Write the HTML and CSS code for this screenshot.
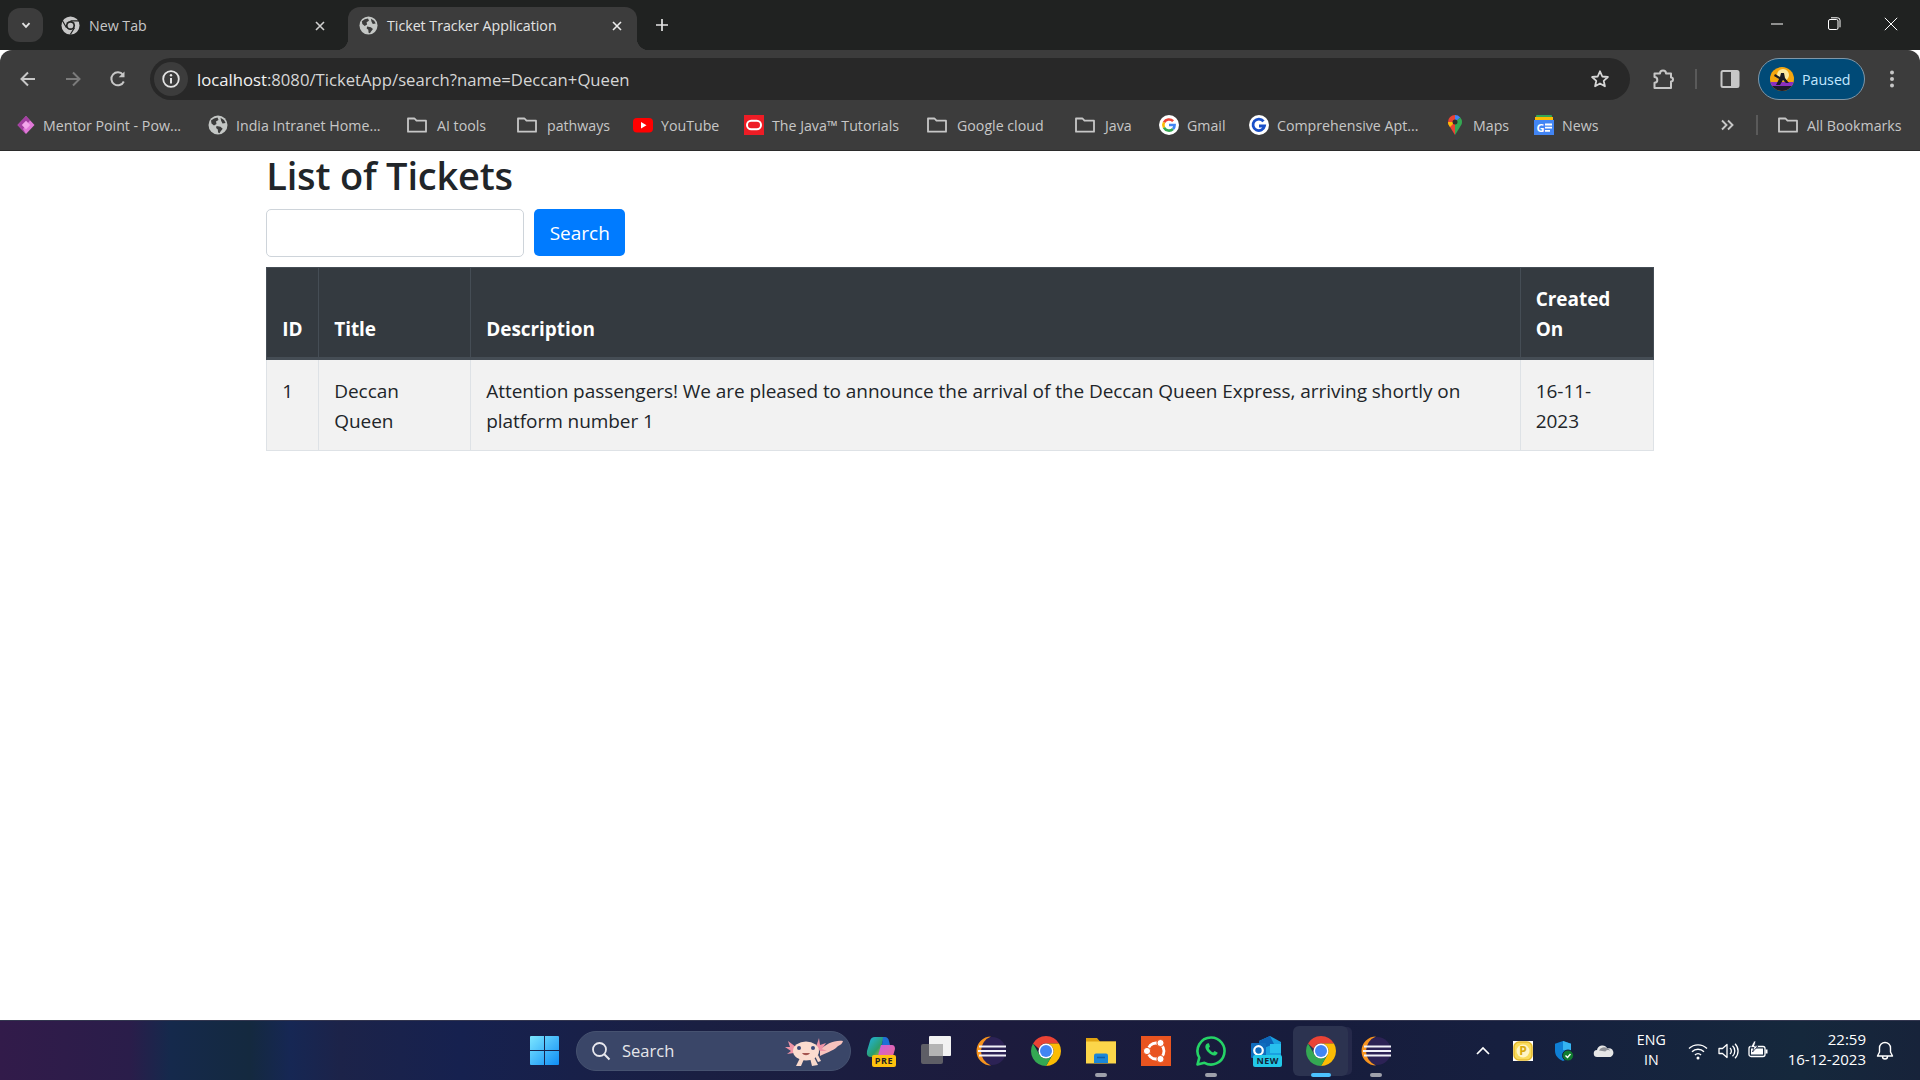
FILE: index.html
```html
<!DOCTYPE html>
<html lang="en">
<head>
<meta charset="utf-8">
<title>Ticket Tracker Application</title>
<link rel="stylesheet" href="styles.css">
</head>
<body>
<svg class="defs" width="0" height="0" aria-hidden="true">
  <symbol id="chrome" viewBox="4 4 40 40">
    <path fill="#ea4335" d="M24 4a20 20 0 0 1 17.32 10H24a10 10 0 0 0-9.5 6.9L6.68 14A20 20 0 0 1 24 4z"/>
    <path fill="#fbbc04" d="M41.32 14A20 20 0 0 1 24 44l8.66-15A10 10 0 0 0 24 14z"/>
    <path fill="#34a853" d="M24 44A20 20 0 0 1 6.68 14l8.66 15A10 10 0 0 0 32.66 29z"/>
    <circle cx="24" cy="24" r="10" fill="#fff"/>
    <circle cx="24" cy="24" r="8" fill="#4285f4"/>
  </symbol>
  <symbol id="globe" viewBox="0 0 20 20">
    <circle cx="10" cy="10" r="9.5" fill="#c4c7c5"/>
    <path fill="#3c3c3c" d="M3 5.5 6 3.5 9.5 2.5 10.5 5 8 6.5 8.5 9 6 10.5 3.5 8.5zM12.5 2.8 16 5l1.6 3-3.1.4-1.4-2.6zM8.5 11l4 .8 2.2 2-2 2.4-1.2 2-1.4-.6-.3-3-1.7-1.5z"/>
  </symbol>
  <symbol id="folder" viewBox="0 0 20 20">
    <path fill="none" stroke="#c7c7c7" stroke-width="1.8" stroke-linejoin="round" d="M1 3.500h6.500l2 2.200H19v11H1z"/>
  </symbol>
  <symbol id="gmark" viewBox="0 0 20 20">
    <circle cx="10" cy="10" r="10" fill="#fff"/>
    <path fill="none" stroke="#ea4335" stroke-width="2.6" d="M14.1 6.2A5.7 5.7 0 0 0 5 7.4"/>
    <path fill="none" stroke="#fbbc04" stroke-width="2.6" d="M5 7.4a5.7 5.7 0 0 0 0 5.2"/>
    <path fill="none" stroke="#34a853" stroke-width="2.6" d="M5 12.6a5.7 5.7 0 0 0 9 1.4"/>
    <path fill="none" stroke="#4285f4" stroke-width="2.6" d="M14 14a5.6 5.6 0 0 0 1.6-4H10"/>
  </symbol>
  <symbol id="eclipse" viewBox="0 0 30 30">
    <circle cx="16" cy="15" r="14" fill="#2c2255"/>
    <path fill="#f7941e" d="M15 0.5A14.5 14.5 0 0 0 15 29.5 15.5 15.5 0 0 1 15 .5z"/>
    <path fill="none" stroke="#f1f1f8" stroke-width="2" d="M3 10.500H30M2 15H30M3 19.500H30"/>
  </symbol>
</svg>

<header class="browser">
  <div class="tabstrip">
    <button class="tab-search" type="button">
      <svg class="ico-sm" viewBox="0 0 14 14"><path d="M3.500 5.200 7 8.800l3.500-3.600" fill="none" stroke="#e3e3e3" stroke-width="1.900"/></svg>
    </button>
    <div class="tab">
      <svg class="favicon" viewBox="0 0 20 20">
        <circle cx="10" cy="10" r="9.500" fill="#c7c7c7"/>
        <circle cx="10" cy="10" r="4.800" fill="#202221"/>
        <circle cx="10" cy="10" r="3" fill="#c7c7c7"/>
        <path d="M10 5.200h9M5.800 12.400 1.500 5M14.200 12.400 9.800 19.500" stroke="#202221" stroke-width="1.300"/>
      </svg>
      <span class="tab-title">New Tab</span>
      <svg class="tab-close" viewBox="0 0 12 12"><path d="M2 2l8 8M10 2l-8 8" stroke="#d0d0d0" stroke-width="1.600"/></svg>
    </div>
    <div class="tab tab-active">
      <svg class="favicon"><use href="#globe"/></svg>
      <span class="tab-title">Ticket Tracker Application</span>
      <svg class="tab-close" viewBox="0 0 12 12"><path d="M2 2l8 8M10 2l-8 8" stroke="#ececec" stroke-width="1.600"/></svg>
    </div>
    <svg class="newtab" viewBox="0 0 14 14"><path d="M7 1v12M1 7h12" stroke="#e3e3e3" stroke-width="1.700"/></svg>
    <div class="winctl">
      <svg class="winbtn" viewBox="0 0 14 14"><path d="M1 7h12" stroke="#fff" stroke-width="1"/></svg>
      <svg class="winbtn" viewBox="0 0 14 14"><rect x="1.500" y="2.500" width="9.500" height="10" rx="1.500" fill="none" stroke="#fff"/><path d="M4 .8h6.500a2.500 2.500 0 0 1 2.500 2.500v7" fill="none" stroke="#fff"/></svg>
      <svg class="winbtn" viewBox="0 0 14 14"><path d="M.8.800l12.400 12.400M13.200.800.800 13.200" stroke="#fff" stroke-width="1"/></svg>
    </div>
  </div>

  <div class="toolbar">
    <svg class="tool" viewBox="0 0 20 20"><path d="M17 10H4M10 3.500 3.500 10l6.500 6.500" fill="none" stroke="#c7c7c7" stroke-width="2"/></svg>
    <svg class="tool" viewBox="0 0 20 20"><path d="M3 10h13M10 3.500l6.500 6.500-6.500 6.500" fill="none" stroke="#7b7b7b" stroke-width="2"/></svg>
    <svg class="tool" viewBox="0 0 20 20"><path d="M15.800 12.500A6.500 6.500 0 1 1 15 5.800" fill="none" stroke="#c7c7c7" stroke-width="2"/><path d="M16.500 2.500v5.800h-5.800z" fill="#c7c7c7"/></svg>
    <div class="omnibox">
      <span class="site-info">
        <svg class="info" viewBox="0 0 20 20"><circle cx="10" cy="10" r="7.800" fill="none" stroke="#e3e3e3" stroke-width="1.800"/><path d="M10 9v5.500" stroke="#e3e3e3" stroke-width="2"/><circle cx="10" cy="6.300" r="1.200" fill="#e3e3e3"/></svg>
      </span>
      <span class="url"><span class="url-host">localhost</span>:8080/TicketApp/search?name=Deccan+Queen</span>
      <svg class="star" viewBox="0 0 20 20"><path d="M10 2.300l2.300 5.200 5.600.5-4.200 3.800 1.200 5.500L10 14.500l-4.900 2.800 1.200-5.500L2.100 8l5.600-.5z" fill="none" stroke="#d6d6d6" stroke-width="1.800" stroke-linejoin="round"/></svg>
    </div>
    <div class="actions">
      <svg class="tool-r puzzle" viewBox="0 0 20 20"><path d="M1.500 19v-5.300a2.800 2.800 0 0 0 0-5.600V4.500h5.500a3 3 0 0 1 6 0h5v4a2 2 0 0 1 0 4v6.500z" fill="none" stroke="#c7c7c7" stroke-width="2" stroke-linejoin="round"/></svg>
      <span class="vsep"></span>
      <svg class="tool-r panel" viewBox="0 0 20 20"><rect x="1.500" y="2" width="17" height="16" rx="1.500" fill="none" stroke="#c7c7c7" stroke-width="2"/><rect x="11" y="2" width="7.500" height="16" fill="#c7c7c7"/></svg>
      <div class="profile">
        <svg class="avatar" viewBox="0 0 24 24">
          <defs><clipPath id="avc"><circle cx="12" cy="12" r="12"/></clipPath></defs>
          <g clip-path="url(#avc)">
            <rect width="24" height="24" fill="#f5a60e"/>
            <circle cx="13" cy="8" r="6" fill="#fde9a0"/>
            <rect y="15" width="24" height="4" fill="#8b2fc0"/>
            <rect y="19" width="24" height="5" fill="#1e1a2c"/>
            <path d="M5 7l5 3 1-4h3l1 5 4 5h-3l-3-3-3 5H6l3-6-5-3z" fill="#1b1b24"/>
          </g>
        </svg>
        <span class="paused">Paused</span>
      </div>
      <svg class="tool-r dots" viewBox="0 0 6 20"><circle cx="3" cy="3.500" r="2" fill="#c7c7c7"/><circle cx="3" cy="10" r="2" fill="#c7c7c7"/><circle cx="3" cy="16.500" r="2" fill="#c7c7c7"/></svg>
    </div>
  </div>

  <nav class="bookmarks">
    <a class="bm bm-first"><svg class="bm-ico" viewBox="0 0 20 20"><path d="M10 1 18.500 10 10 19 1.500 10z" fill="#e078d8"/><path d="M10 1 14 5.500 7 14l3 5-8.500-9z" fill="#a33ea1"/><path d="M10 5.800 14.200 10 10 14.200 5.800 10z" fill="#f4a6ec"/></svg><span>Mentor Point - Pow...</span></a>
    <a class="bm"><svg class="bm-ico"><use href="#globe"/></svg><span>India Intranet Home...</span></a>
    <a class="bm bm-folder"><svg class="bm-ico"><use href="#folder"/></svg><span>AI tools</span></a>
    <a class="bm bm-folder"><svg class="bm-ico"><use href="#folder"/></svg><span>pathways</span></a>
    <a class="bm"><svg class="bm-ico" viewBox="0 0 20 20"><rect y="3" width="20" height="14.500" rx="4" fill="#f00"/><path d="M8 7l5.500 3.200L8 13.500z" fill="#fff"/></svg><span>YouTube</span></a>
    <a class="bm"><svg class="bm-ico" viewBox="0 0 20 20"><rect width="20" height="20" fill="#ee1c25"/><rect x="3" y="5.800" width="14" height="8.400" rx="4.200" fill="none" stroke="#fff" stroke-width="2"/></svg><span>The Java™ Tutorials</span></a>
    <a class="bm bm-folder"><svg class="bm-ico"><use href="#folder"/></svg><span>Google cloud</span></a>
    <a class="bm bm-folder"><svg class="bm-ico"><use href="#folder"/></svg><span>Java</span></a>
    <a class="bm"><svg class="bm-ico"><use href="#gmark"/></svg><span>Gmail</span></a>
    <a class="bm"><svg class="bm-ico" viewBox="0 0 20 20"><circle cx="10" cy="10" r="10" fill="#fff"/><path d="M14.500 6.400A5.800 5.800 0 1 0 15.500 11H10" fill="none" stroke="#1a50c8" stroke-width="2.800"/></svg><span>Comprehensive Apt...</span></a>
    <a class="bm"><svg class="bm-ico" viewBox="0 0 20 20"><path d="M10 0a7 7 0 0 0-7 7c0 2 .8 3.500 2 5l5 8V10z" fill="#ea4335"/><path d="M10 0a7 7 0 0 1 5.300 2.400L10 7z" fill="#4285f4"/><path d="M15.300 2.400A7 7 0 0 1 17 7c0 2-1 3.500-2 5l-5 8V7z" fill="#34a853"/><path d="M3 7c0 2 .8 3.500 2 5l5-5z" fill="#fbbc04"/><circle cx="10" cy="7" r="2.500" fill="#2f2f2f"/></svg><span>Maps</span></a>
    <a class="bm"><svg class="bm-ico" viewBox="0 0 20 20"><rect x="2" y="0" width="16" height="6" rx="1" fill="#34a853"/><rect x="1" y="2" width="18" height="5" fill="#fbbc04"/><rect y="5" width="20" height="15" fill="#4285f4"/><text class="news-g" x="2.500" y="16.500">G</text><path d="M11 9.500h7M11 12.700h7M11 15.900h5" stroke="#fff" stroke-width="1.800"/></svg><span>News</span></a>
    <svg class="more" viewBox="0 0 14 14"><path d="M2 2.500 6.500 7 2 11.500M8 2.500 12.500 7 8 11.500" fill="none" stroke="#c7c7c7" stroke-width="1.900"/></svg>
    <span class="vsep"></span>
    <a class="bm bm-folder bm-all"><svg class="bm-ico"><use href="#folder"/></svg><span>All Bookmarks</span></a>
  </nav>
</header>

<main class="page">
  <div class="container">
    <h2 class="heading">List of Tickets</h2>
    <form class="search-form">
      <input class="search-input" type="text" aria-label="Search">
      <button class="search-btn" type="button">Search</button>
    </form>
    <table class="tickets">
      <thead>
        <tr><th class="c-id">ID</th><th class="c-title">Title</th><th>Description</th><th class="c-date">Created On</th></tr>
      </thead>
      <tbody>
        <tr>
          <td>1</td>
          <td>Deccan Queen</td>
          <td>Attention passengers! We are pleased to announce the arrival of the Deccan Queen Express, arriving shortly on platform number 1</td>
          <td>16-11-<br>2023</td>
        </tr>
      </tbody>
    </table>
  </div>
</main>

<footer class="taskbar">
  <div class="tb-center">
    <svg class="winlogo" viewBox="0 0 30 30">
      <defs><linearGradient id="wl" x1="0" y1="0" x2="1" y2="1"><stop offset="0" stop-color="#7ce6ff"/><stop offset="1" stop-color="#0f8df5"/></linearGradient></defs>
      <path fill="url(#wl)" d="M1 0h13.500v14.500H0V1a1 1 0 0 1 1-1zM15.500 0H29a1 1 0 0 1 1 1v13.500H15.500zM0 15.500h14.500V30H1a1 1 0 0 1-1-1zM15.500 15.500H30V29a1 1 0 0 1-1 1H15.500z"/>
    </svg>
    <div class="tb-search">
      <svg class="tb-glass" viewBox="0 0 20 20"><circle cx="8.500" cy="8.500" r="6.500" fill="none" stroke="#e8e8ee" stroke-width="1.800"/><path d="M13.300 13.300 18.500 18.500" stroke="#e8e8ee" stroke-width="2"/></svg>
      <span class="tb-search-text">Search</span>
      <svg class="axolotl" viewBox="0 0 60 34">
        <path d="M36 16c6-6 14-10 23-9-1 4-4 4-6 6-4 4-12 6-17 9z" fill="#f8c3bd"/>
        <path d="M12 13 4 7l2 6-5 0 6 4-4 3 7-1zM32 13l3-9 1 7 6-2-4 6 5 2-7 0z" fill="#ef94a6"/>
        <path d="M12 32l4-8 4 1-3 7zM28 32l-2-8 4-1 4 8zM34 28l-3-6 3-1 3 6z" fill="#f9d9cb"/>
        <ellipse cx="22" cy="17" rx="13" ry="9.500" fill="#fbdccf"/>
        <circle cx="15" cy="14" r="2" fill="#3a4a7a"/><circle cx="29" cy="14" r="2" fill="#3a4a7a"/>
        <path d="M18 19c2 3 6 3 8 0z" fill="#a5544f"/>
      </svg>
    </div>
    <div class="tb-apps">
      <span class="app">
        <svg class="app-ico" viewBox="0 0 30 30">
          <defs><linearGradient id="cp1" x1="0" y1="0" x2="1" y2="1"><stop offset="0" stop-color="#1fb5e8"/><stop offset=".6" stop-color="#2c9e6a"/><stop offset="1" stop-color="#f3c31b"/></linearGradient><linearGradient id="cp2" x1="0" y1="0" x2="1" y2="1"><stop offset="0" stop-color="#c95fe0"/><stop offset="1" stop-color="#ef6a8c"/></linearGradient></defs>
          <path fill="url(#cp1)" d="M9 1h9l-6 20H5q-5 0-4-6L4 5q1-4 5-4z"/>
          <path fill="url(#cp2)" d="M15 9h11q3 0 3 4l-2 7q-1 3-5 3H11z"/>
          <path fill="#1f6fd6" d="M17 1h2q3 0 4 4l1 4h-8z"/>
        </svg>
        <span class="badge badge-pre">PRE</span>
      </span>
      <span class="app">
        <svg class="app-ico" viewBox="0 0 30 30"><rect x="0" y="8" width="22" height="20" rx="2" fill="#5e5e66"/><rect x="8" y="0" width="22" height="20" rx="1" fill="#f2f2f2"/><rect x="8" y="8" width="14" height="12" fill="#b4b4b4"/></svg>
      </span>
      <span class="app"><svg class="app-ico"><use href="#eclipse"/></svg></span>
      <span class="app"><svg class="app-ico"><use href="#chrome"/></svg></span>
      <span class="app has-dot">
        <svg class="app-ico" viewBox="0 0 30 30"><path d="M0 2h11l3 3.500H30V27H0z" fill="#e0a310"/><rect y="5.500" width="30" height="22" fill="#fcd64a"/><path d="M8 19.500a2 2 0 0 1 2-2h10a2 2 0 0 1 2 2V27H8z" fill="#1a86d8"/><path d="M11 21.500h8" stroke="#0e5fa8" stroke-width="1.500"/></svg>
      </span>
      <span class="app"><svg class="app-ico" viewBox="0 0 30 30"><rect width="30" height="30" fill="#e95420"/><circle cx="15" cy="15" r="8" fill="none" stroke="#fff" stroke-width="2.800"/><circle cx="6" cy="15" r="3.600" fill="#fff" stroke="#e95420"/><circle cx="19.500" cy="7" r="3.600" fill="#fff" stroke="#e95420"/><circle cx="19.500" cy="23" r="3.600" fill="#fff" stroke="#e95420"/></svg></span>
      <span class="app has-dot"><svg class="app-ico" viewBox="0 0 30 30"><path d="M15 1.500a13.500 13.500 0 1 1-6.500 25.300L1.500 28.500l1.800-6.800A13.500 13.500 0 0 1 15 1.500z" fill="none" stroke="#25d366" stroke-width="2.600" stroke-linejoin="round"/><path d="M10.500 8c-2 2-1.300 5 1.500 8s6 4.300 8 3c1.500-1 1.800-2 1.500-2.500l-3-1.500-1.300 1.500c-1.500-.3-4-2.700-4.500-4.500l1.300-1.200L13 7.500c-.5-.5-1.500-.5-2.500.5z" fill="#25d366"/></svg></span>
      <span class="app">
        <svg class="app-ico" viewBox="0 0 30 30"><path d="M8 5 19 0l11 6v18H8z" fill="#1aa1e0"/><path d="M8 5 19 0l4 8-15 6z" fill="#0c64b8"/><path d="M19 8h11v9H19z" fill="#28c0ee"/><rect y="7" width="15" height="15" rx="1" fill="#0f6cbd"/><circle cx="7.500" cy="14.500" r="4.300" fill="none" stroke="#fff" stroke-width="2.200"/></svg>
        <span class="badge badge-new">NEW</span>
      </span>
      <span class="app app-active">
        <svg class="app-ico"><use href="#chrome"/></svg>
      </span>
      <span class="app has-dot"><svg class="app-ico"><use href="#eclipse"/></svg></span>
    </div>
  </div>
  <div class="tray">
    <svg class="tray-chev" viewBox="0 0 14 8"><path d="M1 7l6-6 6 6" fill="none" stroke="#fff" stroke-width="1.700"/></svg>
    <svg class="tray-p" viewBox="0 0 20 20"><rect width="20" height="20" fill="#fff"/><rect x="1" y="1" width="18" height="18" rx="5" fill="#f9dc5c" stroke="#e6bb2e" stroke-width="1.500"/><circle cx="10" cy="10" r="6.500" fill="#fff5c4"/><text class="tray-p-text" x="10" y="14">P</text></svg>
    <svg class="tray-shield" viewBox="0 0 20 20"><path d="M9 0l8 2.800V10c0 5-4 8.500-8 10-4-1.500-8-5-8-10V2.800z" fill="#0f7fd4"/><path d="M9 0l8 2.800V9H9z" fill="#35b3f0"/><circle cx="14" cy="14.500" r="5.500" fill="#117c30" stroke="#16213d"/><path d="M11.500 14.500l2 2 3-3.500" fill="none" stroke="#fff" stroke-width="1.400"/></svg>
    <svg class="tray-cloud" viewBox="0 0 20 12"><path d="M3.500 12a3.500 3.500 0 0 1-.5-7 5.500 5.500 0 0 1 10.300-1.500A4.200 4.200 0 0 1 16.500 12z" fill="#e6e6e6"/><path d="M5 5.500a5.500 5.500 0 0 1 8.300-2 4.200 4.200 0 0 1 3 2.500 3 3 0 0 0-5 .5z" fill="#8d8f96"/></svg>
    <div class="lang"><span>ENG</span><span>IN</span></div>
    <svg class="tray-ico" viewBox="0 0 20 20"><path d="M1 7.500a13 13 0 0 1 18 0M4 10.800a8.500 8.500 0 0 1 12 0M7 14a4 4 0 0 1 6 0" fill="none" stroke="#fff" stroke-width="1.400"/><circle cx="10" cy="17" r="1.500" fill="#fff"/></svg>
    <svg class="tray-ico" viewBox="0 0 20 20"><path d="M1 7.500h3.500L9 3.500v13l-4.500-4H1z" fill="none" stroke="#fff" stroke-width="1.300" stroke-linejoin="round"/><path d="M12 7a4 4 0 0 1 0 6M14.500 4.800a7 7 0 0 1 0 10.400M17 2.800a10 10 0 0 1 0 14.400" fill="none" stroke="#fff" stroke-width="1.300"/></svg>
    <svg class="tray-ico" viewBox="0 0 20 20"><rect x="1" y="5.500" width="16" height="10" rx="2" fill="none" stroke="#fff" stroke-width="1.300"/><rect x="3" y="7.500" width="12" height="6" fill="#fff"/><rect x="17.500" y="8.500" width="2" height="4" fill="#fff"/><path d="M6 0 2.500 6.500H6L4.500 11 10 5H6.500L8 0z" fill="#fff" stroke="#16213d" stroke-width=".8"/></svg>
    <div class="clock"><span>22:59</span><span>16-12-2023</span></div>
    <svg class="tray-bell" viewBox="0 0 20 20"><path d="M10 1.500a5.500 5.500 0 0 0-5.500 5.500v4L2.500 15h15l-2-4V7A5.500 5.500 0 0 0 10 1.500zM7.500 15.500a2.500 2.500 0 0 0 5 0" fill="none" stroke="#fff" stroke-width="1.400" stroke-linejoin="round"/></svg>
  </div>
</footer>
</body>
</html>
```

FILE: styles.css
```css
* { box-sizing: border-box; }
html, body { height: 100%; }
body {
  margin: 0;
  display: flex;
  flex-direction: column;
  height: 1080px;
  overflow: hidden;
  background: #fff;
  color: #212529;
  font-family: "Open Sans", "Noto Sans", "Liberation Sans", sans-serif;
}
.defs { position: absolute; }
svg { display: block; flex: none; overflow: visible; }

/* browser chrome */
.browser { flex: none; }
.tabstrip {
  height: 50px;
  background: #202221;
  display: flex;
  align-items: flex-end;
  padding-left: 8px;
}
.tab-search {
  width: 35px;
  height: 34px;
  margin-bottom: 8px;
  border: 0;
  padding: 0;
  border-radius: 12px;
  background: #3c3c3c;
  display: flex;
  align-items: center;
  justify-content: center;
}
.ico-sm { width: 14px; height: 14px; }
.tab {
  width: 292px;
  height: 43px;
  margin-left: 5px;
  padding: 0 14px 6px 13px;
  display: flex;
  align-items: center;
  color: #c7c7c7;
  font-size: 14.2px;
  position: relative;
}
.tab + .tab { margin-left: 8px; width: 289px; padding-left: 11px; }
.tab-active {
  background: #3c3c3c;
  border-radius: 12px 12px 0 0;
  color: #e3e3e3;
}
.tab-active::before,
.tab-active::after {
  content: "";
  position: absolute;
  bottom: 0;
  width: 12px;
  height: 12px;
}
.tab-active::before { left: -12px; background: radial-gradient(circle at 0 0, transparent 12px, #3c3c3c 12.500px); }
.tab-active::after { right: -12px; background: radial-gradient(circle at 100% 0, transparent 12px, #3c3c3c 12.500px); }
.favicon { width: 19px; height: 19px; }
.tab-title { margin-left: 9px; flex: 1; white-space: nowrap; }
.tab-close { width: 12px; height: 12px; margin-right: 0; }
.newtab { width: 14px; height: 14px; margin: 0 0 18px 18px; }
.winctl {
  margin-left: auto;
  display: flex;
  align-self: stretch;
  align-items: center;
  gap: 43px;
  padding: 0 22px 2px 0;
}
.winbtn { width: 14px; height: 14px; }

.toolbar {
  height: 50px;
  background: #3c3c3c;
  border-radius: 12px 12px 0 0;
  padding: 8px 0 0 18px;
  display: flex;
  align-items: center;
}
.tool { width: 20px; height: 20px; margin-right: 25px; }
.tool:nth-child(3) { margin-right: 22px; }
.omnibox {
  width: 1480px;
  height: 42px;
  background: #282828;
  border-radius: 21px;
  display: flex;
  align-items: center;
  padding: 0 20px 0 4px;
}
.site-info {
  width: 34px;
  height: 34px;
  border-radius: 50%;
  background: #3c3c3c;
  display: flex;
  align-items: center;
  justify-content: center;
}
.info { width: 20px; height: 20px; }
.url {
  margin-left: 9px;
  flex: 1;
  color: #d6d6d6;
  font-size: 16.7px;
  white-space: nowrap;
}
.url-host { color: #f2f2f2; }
.star { width: 20px; height: 20px; }
.actions { display: flex; align-items: center; flex: 1; padding-left: 23px; }
.tool-r { width: 20px; height: 20px; }
.vsep { width: 2px; height: 20px; background: #5a5a5a; flex: none; }
.actions .vsep { margin: 0 23px 0 22px; }
.profile {
  margin-left: 18px;
  width: 107px;
  height: 42px;
  border-radius: 21px;
  background: #004a77;
  border: 1px solid #7f97a8;
  display: flex;
  align-items: center;
  padding-left: 11px;
  color: #c2e7ff;
  font-size: 14.2px;
}
.avatar { width: 24px; height: 24px; }
.paused { margin-left: 8px; }
.dots { width: 6px; margin-left: 24px; }

.bookmarks {
  height: 50px;
  background: #3c3c3c;
  display: grid;
  grid-template-columns: 192px 199px 110px 116px 111px 183px 148px 84px 90px 196px 89px 186px 36px 22px 1fr;
  align-items: center;
  padding-left: 16px;
  color: #c7c7c7;
  font-size: 14.2px;
}
.bm { display: flex; align-items: center; gap: 8px; white-space: nowrap; }
.bm-first { gap: 7px; }
.bm-folder { gap: 10px; }
.bm-all { gap: 9px; }
.bm-ico { width: 20px; height: 20px; }
.news-g { font: 700 11px "Open Sans", sans-serif; fill: #fff; }
.more { width: 14px; height: 14px; }

/* page */
.page {
  flex: 1;
  border-top: 1px solid #2b2b2b;
  background: #fff;
}
.container { width: 1425px; margin: 0 auto; padding: 0 18.750px; }
.heading {
  margin: 0 0 10px;
  font-size: 38px;
  font-weight: 600;
  line-height: 48px;
  letter-spacing: -0.2px;
  color: #212529;
}
.search-form { display: flex; gap: 10px; margin-bottom: 10px; }
.search-input {
  width: 258px;
  height: 48px;
  border: 1px solid #ced4da;
  border-radius: 5px;
  background: #fff;
}
.search-btn {
  width: 91px;
  height: 47px;
  border: 0;
  border-radius: 5px;
  background: #007bff;
  color: #fff;
  font: 400 19px/1.5 "Open Sans", sans-serif;
  padding: 2px 0 0;
}
.tickets {
  width: 100%;
  border-collapse: collapse;
  table-layout: fixed;
  font-size: 19px;
  line-height: 30px;
  letter-spacing: -0.06px;
}
.tickets th, .tickets td {
  padding: 15px;
  text-align: left;
  vertical-align: bottom;
  font-weight: 400;
}
.tickets th {
  background: #343a40;
  color: #fff;
  font-weight: 700;
  border: 1px solid #454d55;
  border-bottom-width: 3px;
  height: 91px;
  padding: 15px 15px 13px;
}
.tickets td {
  background: #f2f2f2;
  border: 1px solid #dee2e6;
  vertical-align: top;
  padding: 16px 15px 14px;
}
.c-id { width: 52px; }
.c-title { width: 152px; }
.c-date { width: 133px; }

/* taskbar */
.taskbar {
  flex: none;
  height: 60px;
  border-top: 1px solid #33364f;
  background: linear-gradient(90deg, #321b4a 0, #2a1d4a 130px, #15294c 170px, #14293f 250px, #162754 290px, #1c2349 340px, #16214f 460px, #1a1f42 700px, #1c1b3d 1000px, #171c3c 1300px, #161f3f 1500px, #15283c 1800px, #17233a 1920px);
  display: flex;
  align-items: center;
  color: #fff;
}
.tb-center { display: flex; align-items: center; padding-left: 530px; }
.winlogo { width: 29px; height: 29px; }
.tb-search {
  margin-left: 17px;
  width: 275px;
  height: 40px;
  border-radius: 20px;
  background: #3a4668;
  border: 1px solid #465270;
  display: flex;
  align-items: center;
  padding-left: 14px;
  position: relative;
  color: #e6e6ea;
  font-size: 16.500px;
}
.tb-glass { width: 20px; height: 20px; }
.tb-search-text { margin-left: 11px; }
.axolotl { width: 60px; height: 34px; margin-left: auto; margin-right: 6px; }
.tb-apps { display: flex; align-items: center; margin-left: 2px; }
.app {
  width: 55px;
  height: 50px;
  display: flex;
  align-items: center;
  justify-content: center;
  position: relative;
}
.app-ico { width: 30px; height: 30px; }
.has-dot::after, .app-active::after {
  content: "";
  position: absolute;
  left: 50%;
  bottom: -1px;
  width: 12px;
  height: 4px;
  margin-left: -6px;
  border-radius: 2px;
  background: #9ea0ab;
}
.app-active {
  background: #2c3350;
  border-radius: 6px;
  box-shadow: 5px 0 0 -1px #25294a;
}
.app-active::after { width: 20px; margin-left: -10px; background: #4cc2ff; }
.badge {
  position: absolute;
  font: 700 9px/12px "Open Sans", sans-serif;
  padding: 0 3px;
  border-radius: 2px;
  letter-spacing: .5px;
}
.badge-pre { right: 12px; bottom: 9px; background: #ffc20e; color: #222; }
.badge-new { right: 11px; bottom: 9px; background: #22c8e8; color: #12263a; }
.tray { margin-left: auto; display: flex; align-items: center; height: 100%; }
.tray-chev { width: 14px; height: 8px; margin-right: 23px; }
.tray-p { width: 20px; height: 20px; margin-right: 21px; }
.tray-p-text { font: 700 12px "Open Sans", sans-serif; fill: #d8a90c; text-anchor: middle; }
.tray-shield { width: 20px; height: 20px; margin-right: 20px; }
.tray-cloud { width: 20px; height: 12px; margin-right: 21px; }
.lang {
  display: flex;
  flex-direction: column;
  align-items: center;
  font-size: 14.200px;
  line-height: 20px;
  margin: -1px 22px 0 2px;
}
.tray-ico { width: 20px; height: 20px; margin-right: 10px; }
.clock {
  display: flex;
  flex-direction: column;
  align-items: flex-end;
  font-size: 15px;
  line-height: 20px;
  margin: -3px 0 0 10px;
}
.tray-bell { width: 20px; height: 20px; margin: 0 25px 0 9px; }
```
